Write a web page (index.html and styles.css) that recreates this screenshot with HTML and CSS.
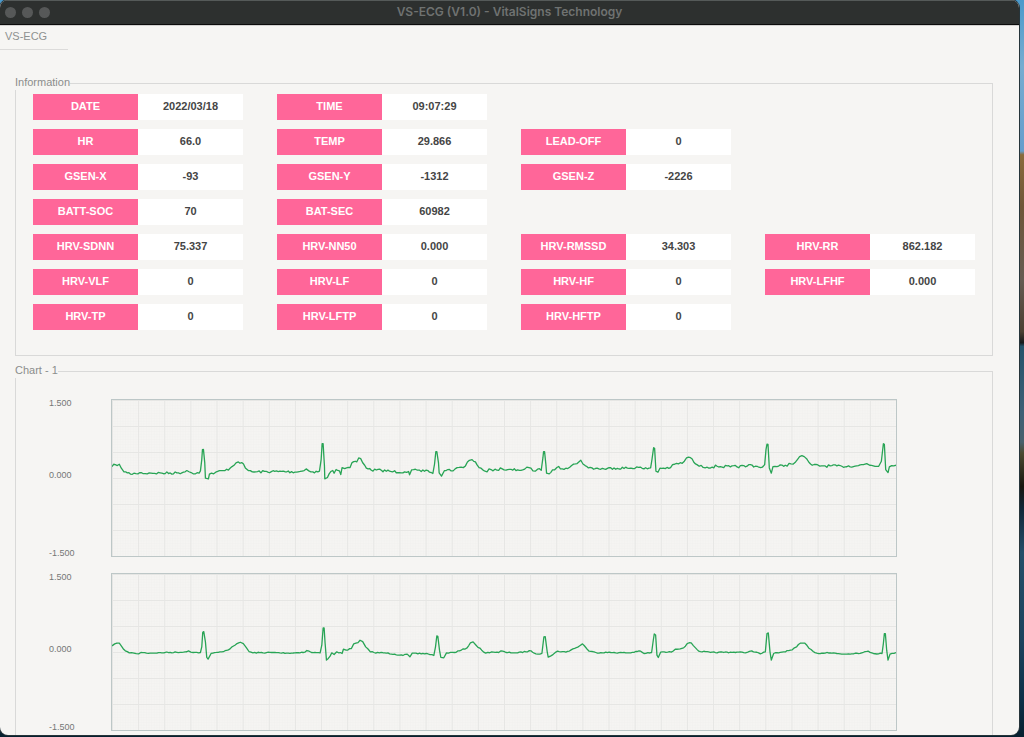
FILE: index.html
```html
<!DOCTYPE html>
<html lang="en">
<head>
<meta charset="utf-8">
<title>VS-ECG (V1.0) - VitalSigns Technology</title>
<link rel="stylesheet" href="styles.css">
</head>
<body class="desktop">
<main class="window">
  <header class="titlebar">
    <div class="lights">
      <button class="light" type="button" aria-label="Close"></button>
      <button class="light" type="button" aria-label="Minimize"></button>
      <button class="light" type="button" aria-label="Zoom"></button>
    </div>
    <h1 class="title">VS-ECG (V1.0) - VitalSigns Technology</h1>
  </header>
  <nav class="tabs"><button class="tab" type="button">VS-ECG</button></nav>
  <div class="content">
    <fieldset class="panel">
      <legend class="panel-name">Information</legend>
      <dl class="readings">
        <div class="reading first"><dt>DATE</dt><dd>2022/03/18</dd></div>
        <div class="reading"><dt>TIME</dt><dd>09:07:29</dd></div>
        <div class="reading first"><dt>HR</dt><dd>66.0</dd></div>
        <div class="reading"><dt>TEMP</dt><dd>29.866</dd></div>
        <div class="reading"><dt>LEAD-OFF</dt><dd>0</dd></div>
        <div class="reading first"><dt>GSEN-X</dt><dd>-93</dd></div>
        <div class="reading"><dt>GSEN-Y</dt><dd>-1312</dd></div>
        <div class="reading"><dt>GSEN-Z</dt><dd>-2226</dd></div>
        <div class="reading first"><dt>BATT-SOC</dt><dd>70</dd></div>
        <div class="reading"><dt>BAT-SEC</dt><dd>60982</dd></div>
        <div class="reading first"><dt>HRV-SDNN</dt><dd>75.337</dd></div>
        <div class="reading"><dt>HRV-NN50</dt><dd>0.000</dd></div>
        <div class="reading"><dt>HRV-RMSSD</dt><dd>34.303</dd></div>
        <div class="reading"><dt>HRV-RR</dt><dd>862.182</dd></div>
        <div class="reading first"><dt>HRV-VLF</dt><dd>0</dd></div>
        <div class="reading"><dt>HRV-LF</dt><dd>0</dd></div>
        <div class="reading"><dt>HRV-HF</dt><dd>0</dd></div>
        <div class="reading"><dt>HRV-LFHF</dt><dd>0.000</dd></div>
        <div class="reading first"><dt>HRV-TP</dt><dd>0</dd></div>
        <div class="reading"><dt>HRV-LFTP</dt><dd>0</dd></div>
        <div class="reading"><dt>HRV-HFTP</dt><dd>0</dd></div>
      </dl>
    </fieldset>
    <fieldset class="panel">
      <legend class="panel-name">Chart - 1</legend>
      <div class="charts">
        <div class="chart">
          <div class="scale"><span>1.500</span><span>0.000</span><span>-1.500</span></div>
          <svg class="plot" viewBox="0 0 2358 471" preserveAspectRatio="none" role="img" aria-label="Raw ECG trace">
            <defs>
              <pattern id="minor" width="7.86" height="7.85" patternUnits="userSpaceOnUse"><path class="minor-line" d="M0 0H7.86M0 0V7.85"/></pattern>
              <pattern id="major" width="78.6" height="78.5" patternUnits="userSpaceOnUse"><path class="major-line" d="M0 0H78.6M0 0V78.5"/></pattern>
            </defs>
            <rect width="2358" height="471" fill="url(#minor)"/>
            <rect width="2358" height="471" fill="url(#major)"/>
            <path class="trace" id="trace-raw"/>
          </svg>
        </div>
        <div class="chart">
          <div class="scale"><span>1.500</span><span>0.000</span><span>-1.500</span></div>
          <svg class="plot" viewBox="0 0 2358 471" preserveAspectRatio="none" role="img" aria-label="Filtered ECG trace">
            <rect width="2358" height="471" fill="url(#minor)"/>
            <rect width="2358" height="471" fill="url(#major)"/>
            <path class="trace" id="trace-filtered"/>
          </svg>
        </div>
      </div>
    </fieldset>
  </div>
</main>
<script src="charts.js"></script>
</body>
</html>
```
FILE: styles.css
```css
* { box-sizing: border-box; }

.desktop {
  margin: 0;
  height: 100vh;
  overflow: hidden;
  padding: 0 5px 2px 0;
  font-family: "Liberation Sans", Arial, sans-serif;
  font-size: 11px;
  background: linear-gradient(#4b9acb 0, #76acd0 9%, #659dcc 20.5%, #8a6b3c 21%, #6e5638 28%, #665b52 38%, #4b4032 45%, #171a1c 46.5%, #25536b 47%, #3e6076 56%, #48606c 60%, #4b4930 61.5%, #17160f 66%, #102738 69%, #244e69 75%, #1b425d 87%, #0c3048 95%, #06202f);
}

.window {
  display: flex;
  flex-direction: column;
  height: 100%;
  overflow: hidden;
  background: #f6f5f3;
  border-radius: 8px;
  box-shadow: 0 0 0 1px #26343a;
}

.titlebar {
  display: grid;
  grid-template-columns: 1fr auto 1fr;
  align-items: center;
  flex: none;
  height: 25px;
  padding: 0 5px;
  background: #2d302f;
  border-top: 1px solid #555a59;
  border-bottom: 1px solid #0b0b0b;
  box-shadow: 0 1px #d2d1d0;
}

.lights { display: flex; gap: 6px; }

.light {
  width: 11px;
  height: 11px;
  padding: 0;
  border: 0;
  border-radius: 50%;
  background: #565858;
}

.title {
  grid-column: 2;
  margin: 0;
  padding-bottom: 1px;
  font: 600 12px/20px Inter, sans-serif;
  color: #6f7271;
}

.tabs { flex: none; height: 51px; }

.tab {
  width: 68px;
  height: 25px;
  padding: 0 0 3px 5px;
  border: 0;
  border-bottom: 1px solid #dcdbda;
  background: none;
  font: inherit;
  text-align: left;
  color: #8f9190;
}

.content {
  display: flex;
  flex-direction: column;
  gap: 8px;
  padding: 0 26px 0 15px;
}

.panel {
  flex: none;
  min-width: 0;
  margin: 0;
  padding: 4px 17px 25px;
  border: 1px solid #d9d9d8;
}

.panel-name {
  margin-left: -18px;
  padding: 0 0 2px;
  line-height: 12px;
  color: #8b8d8c;
}

.readings {
  display: grid;
  grid-template-columns: repeat(4, 1fr);
  gap: 9px 34px;
  margin: 0;
}

.reading {
  display: grid;
  grid-template-columns: 1fr 1fr;
  font-weight: bold;
  line-height: 24px;
  text-align: center;
}

.first { grid-column: 1; }

.reading dt {
  padding-bottom: 2px;
  background: #ff6699;
  color: #fff;
}

.reading dd {
  margin: 0;
  padding-bottom: 2px;
  background: #fff;
  color: #454545;
}

.charts {
  padding: 16px 78px 0 16px;
}

.chart {
  display: grid;
  grid-template-columns: 62px 1fr;
}

.chart + .chart { margin-top: 14px; }

.scale {
  display: grid;
  grid-template-rows: 72px 78px 10px;
  font-size: 9px;
  line-height: 10px;
  color: #757776;
}

.plot {
  width: 100%;
  height: 158px;
  margin-top: 1px;
  border: 1px solid #bdc7c7;
  background: #f5f4f2;
}

.minor-line {
  fill: none;
  stroke: #efeeec;
  stroke-width: 2;
}

.major-line {
  fill: none;
  stroke: #e6e6e4;
  stroke-width: 6;
}

.trace {
  fill: none;
  stroke: #28a455;
  stroke-width: 1.3px;
  stroke-linejoin: round;
  vector-effect: non-scaling-stroke;
}
```
FILE: charts.js
```js
// Sample points of both leads, flat lists of x, y in plot units.
const raw = [
  0,201, 10,195, 22,194, 28,206, 36,217, 46,220, 56,224, 66,221, 78,223, 88,219, 100,222, 112,220,
  150,221, 200,220, 215,218, 225,213, 238,219, 262,221, 266,214, 270,180, 272,150, 275,149, 279,190, 281,236,
  290,238, 293,224, 312,218, 340,213, 355,206, 373,190, 380,187, 390,189, 401,205, 410,213, 422,217,
  500,216, 560,217, 578,213, 584,208, 592,214, 604,217, 624,215, 629,180, 632,132, 635,132, 639,200, 640,238,
  648,234, 658,216, 664,213, 668,221, 674,210, 684,214, 688,225, 692,204, 700,207, 716,204, 722,189, 732,185,
  736,187, 742,175, 748,177, 760,197, 770,208, 780,212, 810,212, 840,216, 880,217, 892,216, 895,226, 901,211,
  930,216, 950,213, 965,222, 970,194, 974,156, 977,156, 982,190, 984,220, 991,230, 1000,213, 1010,210,
  1020,214, 1032,208, 1050,203, 1063,199, 1075,182, 1083,180, 1098,196, 1110,206, 1122,215, 1140,210, 1158,212,
  1168,205, 1185,212, 1220,211, 1235,211, 1254,204, 1266,214, 1280,209, 1291,212, 1296,175, 1298,156, 1301,156,
  1305,195, 1307,221, 1315,223, 1325,211, 1338,204, 1365,206, 1394,193, 1404,187, 1410,182, 1423,198, 1433,205,
  1480,208, 1510,205, 1560,206, 1578,202, 1600,208, 1620,205, 1624,180, 1629,144, 1632,146, 1636,215,
  1642,218, 1648,206, 1680,204, 1692,194, 1715,191, 1728,175, 1740,174, 1755,193, 1766,200, 1790,203,
  1820,200, 1860,202, 1910,200, 1920,195, 1935,200, 1956,203, 1963,195, 1967,150, 1970,133, 1973,134, 1977,205,
  1983,221, 1988,201, 2000,201, 2025,197, 2042,193, 2056,187, 2068,171, 2082,171, 2096,188, 2106,197, 2140,199,
  2195,200, 2245,198, 2260,195, 2270,192, 2279,197, 2306,200, 2314,185, 2320,132, 2323,134, 2327,210, 2334,219,
  2338,202, 2345,198, 2358,197
];
const filtered = [
  0,217, 8,211, 22,209, 30,220, 40,232, 52,238, 66,239, 80,241, 87,237, 115,239, 160,237, 215,236, 230,232,
  244,237, 266,237, 270,220, 273,176, 276,174, 281,205, 285,252, 289,257, 298,240, 330,235, 355,226, 376,210,
  386,206, 395,210, 404,222, 412,234, 424,238, 480,237, 530,239, 580,236, 586,231, 600,237, 626,238, 631,215,
  635,163, 638,163, 641,210, 645,260, 656,248, 661,238, 668,243, 676,235, 692,240, 696,227, 704,230, 720,225,
  727,211, 740,207, 746,200, 754,204, 763,220, 777,235, 788,237, 820,238, 850,242, 875,246, 888,242, 896,250,
  903,239, 920,241, 945,240, 968,246, 973,220, 977,187, 980,188, 985,230, 989,252, 998,253, 1006,238,
  1030,237, 1045,232, 1068,223, 1078,208, 1086,205, 1095,215, 1112,230, 1124,239, 1142,235, 1163,237, 1170,232,
  1185,237, 1220,238, 1260,232, 1275,241, 1293,240, 1299,190, 1303,189, 1309,235, 1312,251, 1320,247, 1340,233,
  1365,236, 1397,222, 1408,216, 1415,211, 1425,222, 1435,233, 1455,237, 1510,237, 1560,238, 1585,232,
  1600,240, 1623,237, 1628,200, 1631,181, 1635,184, 1639,245, 1643,252, 1650,236, 1682,236, 1694,227, 1719,223,
  1730,210, 1742,208, 1755,223, 1765,233, 1800,237, 1870,236, 1910,237, 1924,232, 1950,241, 1965,235, 1970,180,
  1974,178, 1979,235, 1983,260, 1990,240, 2020,235, 2046,229, 2059,220, 2070,209, 2084,209, 2096,224, 2109,234,
  2125,240, 2150,237, 2200,242, 2255,238, 2275,233, 2290,240, 2316,240, 2320,210, 2323,180, 2326,180, 2330,230,
  2334,260, 2340,242, 2358,237
];

// Fills the quiet stretches between sample points with baseline ripple.
function tracePath(points, ripple) {
  let seed = 7;
  const noise = () => {
    seed = (seed * 16807) % 2147483647;
    return (seed / 2147483647 - 0.5) * 2 * ripple;
  };
  let d = `M${points[0]} ${points[1]}`;
  for (let i = 2; i < points.length; i += 2) {
    const x0 = points[i - 2], y0 = points[i - 1];
    const x1 = points[i], y1 = points[i + 1];
    const steps = Math.max(1, Math.floor((x1 - x0) / 5));
    for (let s = 1; s < steps; s++) {
      const t = s / steps;
      d += `L${(x0 + (x1 - x0) * t).toFixed(1)} ${(y0 + (y1 - y0) * t + noise()).toFixed(1)}`;
    }
    d += `L${x1} ${y1}`;
  }
  return d;
}

document.getElementById("trace-raw").setAttribute("d", tracePath(raw, 4));
document.getElementById("trace-filtered").setAttribute("d", tracePath(filtered, 1.6));
```
